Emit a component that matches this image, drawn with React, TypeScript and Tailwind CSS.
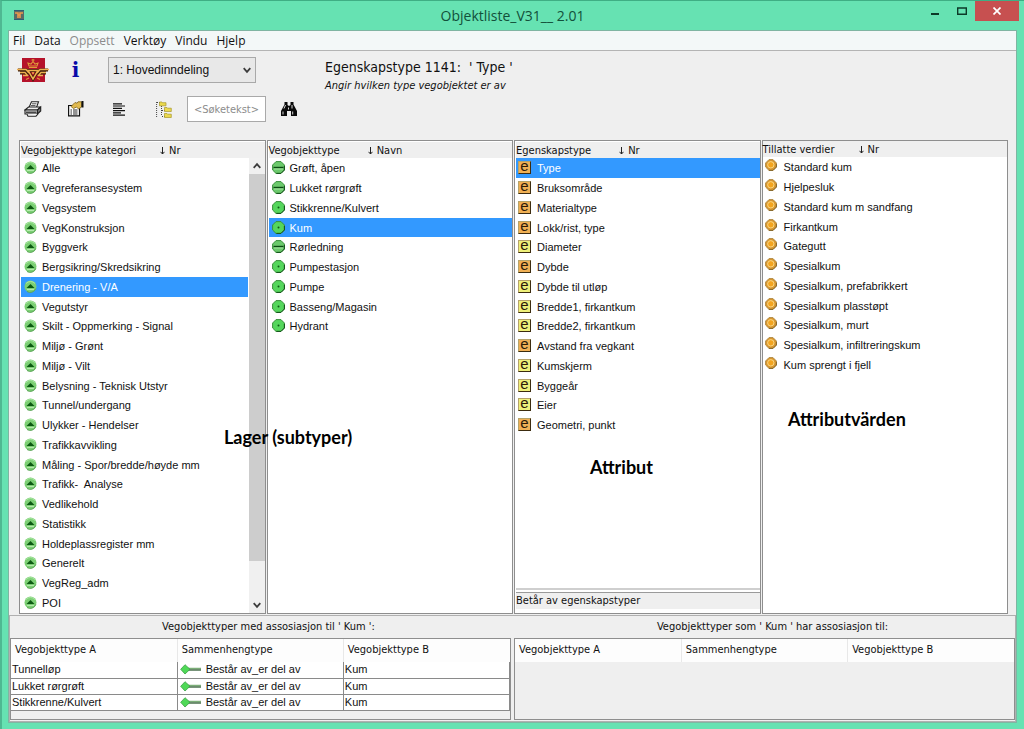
import { useState } from 'react';
import type { ReactNode } from 'react';

const tahoma = "font-['DejaVu_Sans_Condensed','DejaVu_Sans',sans-serif]";

const categories = [
  'Alle', 'Vegreferansesystem', 'Vegsystem', 'VegKonstruksjon', 'Byggverk', 'Bergsikring/Skredsikring',
  'Drenering - V/A', 'Vegutstyr', 'Skilt - Oppmerking - Signal', 'Miljø - Grønt', 'Miljø - Vilt',
  'Belysning - Teknisk Utstyr', 'Tunnel/undergang', 'Ulykker - Hendelser', 'Trafikkavvikling',
  'Måling - Spor/bredde/høyde mm', 'Trafikk-  Analyse', 'Vedlikehold', 'Statistikk',
  'Holdeplassregister mm', 'Generelt', 'VegReg_adm', 'POI',
];

const objectTypes = [
  { name: 'Grøft, åpen', line: true },
  { name: 'Lukket rørgrøft', line: true },
  { name: 'Stikkrenne/Kulvert', line: false },
  { name: 'Kum', line: false },
  { name: 'Rørledning', line: true },
  { name: 'Pumpestasjon', line: false },
  { name: 'Pumpe', line: false },
  { name: 'Basseng/Magasin', line: false },
  { name: 'Hydrant', line: false },
];

const properties = [
  { name: 'Type', orange: true },
  { name: 'Bruksområde', orange: true },
  { name: 'Materialtype', orange: true },
  { name: 'Lokk/rist, type', orange: true },
  { name: 'Diameter', orange: false },
  { name: 'Dybde', orange: true },
  { name: 'Dybde til utløp', orange: false },
  { name: 'Bredde1, firkantkum', orange: false },
  { name: 'Bredde2, firkantkum', orange: false },
  { name: 'Avstand fra vegkant', orange: true },
  { name: 'Kumskjerm', orange: false },
  { name: 'Byggeår', orange: false },
  { name: 'Eier', orange: false },
  { name: 'Geometri, punkt', orange: true },
];

const allowedValues = [
  'Standard kum', 'Hjelpesluk', 'Standard kum m sandfang', 'Firkantkum', 'Gategutt', 'Spesialkum',
  'Spesialkum, prefabrikkert', 'Spesialkum plasstøpt', 'Spesialkum, murt',
  'Spesialkum, infiltreringskum', 'Kum sprengt i fjell',
];

const associations = ['Tunnelløp', 'Lukket rørgrøft', 'Stikkrenne/Kulvert'];

const CategoryIcon = () => (
  <svg className="h-[13px] w-[13px]" viewBox="0 0 13 13">
    <circle cx="6.5" cy="6.5" r="6" fill="#7ccf74" />
    <path d="M2 3.5A6 6 0 0 1 11 3.5" stroke="#a9e6a2" fill="none" />
    <path d="M11.8 8.5A6 6 0 0 1 3 11.5" stroke="#5aa456" fill="none" />
    <path d="M2.5 8L6.5 4L10.5 8Z" fill="#0c5a12" />
    <path d="M3 9.5H10" stroke="#b4e8ac" />
  </svg>
);

const ObjectIcon = ({ line }: { line: boolean }) => (
  <svg className="h-[13px] w-[13px]" viewBox="0 0 13 13">
    <path d="M4 .6H9L12.4 4V9L9 12.4H4L.6 9V4Z" fill={line ? '#6cc96c' : '#55d65c'} stroke="#3a8f3c" strokeWidth="1" />
    <path d="M12.4 5V9L9 12.4H4.5" stroke="#14501a" fill="none" />
    {line ? (
      <>
        <path d="M1.5 6.5H11.5" stroke="#0b4a12" strokeWidth="1.4" />
        <path d="M2 8H11" stroke="#b4ecb0" strokeWidth=".8" />
      </>
    ) : (
      <circle cx="6.5" cy="6.5" r="1" fill="#0c5a12" />
    )}
  </svg>
);

const PropertyIcon = ({ orange }: { orange: boolean }) => (
  <span
    className={`flex h-[13px] w-[13px] items-center justify-center border border-t-[#b5a36a] border-l-[#b5a36a] border-r-[#3c2c10] border-b-[#3c2c10] text-[15px] leading-3 text-[#2c1a08] ${
      orange ? 'bg-[#f0b055]' : 'bg-[#eef07a]'
    }`}
  >
    <span className="-mt-1">e</span>
  </span>
);

const ValueIcon = () => (
  <svg className="h-3 w-3" viewBox="0 0 12 12">
    <path d="M4 .6H8L11.4 4V8L8 11.4H4L.6 8V4Z" fill="#d9962e" stroke="#b08d4a" />
    <path d="M11.4 5V8L8 11.4H4" stroke="#86662a" fill="none" />
    <circle cx="5.8" cy="5.8" r="3.2" fill="#f3a41f" stroke="#f9dc90" strokeWidth=".9" />
  </svg>
);

const LinkIcon = () => (
  <svg className="h-[11px] w-[22px] shrink-0" viewBox="0 0 22 11">
    <path d="M8 4.5H21" stroke="#7cae78" strokeWidth="1.5" />
    <path d="M8 6H21" stroke="#1f4d22" strokeWidth="1.2" />
    <path d="M5 .7L10 5.3L5 10L.7 5.3Z" fill="#4fd957" stroke="#3aa044" strokeWidth=".8" />
  </svg>
);

const Logo = () => (
  <svg className="h-6 w-8" viewBox="0 0 32 24">
    <rect x="5" y="0" width="23" height="24" fill="#b5122a" />
    <g fill="none" stroke="#3a1a08" strokeWidth="3">
      <path d="M1 12H9L12 15M31 12H23L20 15M3 15H8L11 17M29 15H24L21 17" />
      <path d="M11 12.5H21L16 21Z" />
    </g>
    <g fill="none" stroke="#eeb050" strokeWidth="1.5">
      <path d="M0 11.5H9L12 15M32 11.5H23L20 15M3 14.5H8L11 18M29 14.5H24L21 18M6 17.5H11M26 17.5H21" />
      <path d="M11 12.5H21L16 21Z" />
    </g>
    <g fill="none" stroke="#e09a3a" strokeWidth="1.1">
      <path d="M12 9.5H20M12 8L11 5L14 6L16 3.5L18 6L21 5L20 8ZM16 1V4M14.5 2H17.5" />
      <path d="M9 21.5L12 20M23 21.5L20 20" />
    </g>
    <circle cx="16" cy="15" r="1" fill="#eeb050" />
  </svg>
);

const PrinterIcon = () => (
  <svg className="h-4 w-[18px]" viewBox="0 0 18 16" fill="#fff" stroke="#222" strokeWidth="1.1">
    <path d="M5 6.5L7.5 .8H14.5L12.5 6.5Z" />
    <path d="M8 2.8H12.5M7 4.6H11.5" strokeWidth=".8" />
    <path d="M1 9L4.5 6H16L13.5 9Z" fill="#eee" />
    <path d="M1 9H13.5V13H1Z" fill="#ddd" />
    <path d="M13.5 9L16.7 6V10L13.5 13Z" fill="#777" />
    <path d="M2 11.2H12.5" strokeWidth="1.2" />
    <path d="M3 13.2L4 15.2H12L14 13" />
  </svg>
);

const PropertiesIcon = () => (
  <svg className="h-4 w-4" viewBox="0 0 16 16" fill="none" stroke="#111">
    <path d="M.6 4.5H11.5V14.8H.6Z" fill="#fff" strokeWidth="1.2" />
    <path d="M2.5 9H4M5 9H9.5M2.5 11H4M5 11H9.5M2.5 13H4M5 13H9.5" strokeWidth=".9" />
    <path d="M3 5.5L7 1.5L9 2.2L10 .8H13.5V6L10.5 8L8.5 6L5.5 7.5Z" fill="#e0b94e" stroke="#7b611c" strokeWidth=".8" />
    <path d="M14.5 0V6.5" strokeWidth="2" />
  </svg>
);

const ListIcon = () => (
  <svg className="h-[13px] w-3" viewBox="0 0 12 13" stroke="#111" strokeWidth="1.2">
    <path d="M0 .8H9M0 3H12M0 5.3H9M0 7.6H12M0 9.9H8M0 12.2H12" />
  </svg>
);

const TreeIcon = () => (
  <svg className="h-[17px] w-4" viewBox="0 0 16 17">
    <path d="M.6 1V17M1 1.5H4M5.5 5V15M6 9.5H9M6 15.5H9" stroke="#444" strokeDasharray="1 1" fill="none" />
    <g fill="#ead94c" stroke="#a8962c" strokeWidth=".7">
      <path d="M3.5 1H6L6.5 1.7H10V4.8H3.5Z" />
      <path d="M8.5 6.5H11L11.5 7.2H15.3V10.5H8.5Z" />
      <path d="M8.5 12.5H11L11.5 13.2H15.3V16.5H8.5Z" />
    </g>
  </svg>
);

const BinocularsIcon = () => (
  <svg className="h-[14px] w-4" viewBox="0 0 16 14" fill="#0a0a0a">
    <path d="M3.5 0H6.5V3L8 4L9.5 3V0H12.5V2.5L16 9V14H10V9H6V14H0V9L3.5 2.5Z" />
    <path d="M2 9.5V12.5M11.7 9.5V12.5M4.5 3L3 6.5M11 3V6.5M7.5 5.5V7.5" stroke="#eee" strokeWidth=".9" />
  </svg>
);

const Chevron = ({ up = false }: { up?: boolean }) => (
  <svg className="h-2 w-2" viewBox="0 0 8 8" fill="none" stroke="#3c3c3c" strokeWidth="1.8">
    <path d={up ? 'M.7 5.8L4 2.2L7.3 5.8' : 'M.7 2.2L4 5.8L7.3 2.2'} />
  </svg>
);

interface ListPanelProps {
  title: string;
  sort: string;
  gap: string;
  items: { name: string; icon: ReactNode }[];
  initial?: string;
  rowClass: string;
  flat?: boolean;
  scroll?: boolean;
  footer?: ReactNode;
}

const ListPanel = ({ title, sort, gap, items, initial, rowClass, flat, scroll, footer }: ListPanelProps) => {
  const [selected, setSelected] = useState(initial);

  return (
    <section className={`flex min-w-0 flex-col border border-[#8e8e8e] bg-white ${flat ? '' : 'pt-px pl-px'}`}>
      <div className={`flex h-4 items-center bg-[#efefef] text-[11px] leading-[18px] ${gap} ${tahoma}`}>
        <h2 className="pt-px">{title}</h2>
        <button className="flex items-center gap-1 pt-px">
          <svg className="h-2 w-[5px]" viewBox="0 0 5 8" fill="none" stroke="#222">
            <path d="M2.5 0V7M.5 4.8L2.5 7L4.5 4.8" />
          </svg>
          {sort}
        </button>
      </div>
      <div className="flex flex-1">
        <ul className="min-w-0 flex-1">
          {items.map((item) => (
            <li key={item.name} className="h-5 nth-[4n]:h-[19px]">
              <button
                className={`flex h-full w-full whitespace-pre text-left text-[11px] leading-5 ${rowClass} ${
                  selected === item.name ? 'bg-[#3399ff] text-white' : ''
                }`}
                onClick={() => setSelected(item.name)}
              >
                {item.icon}
                <span>{item.name}</span>
              </button>
            </li>
          ))}
        </ul>
        {scroll && (
          <div className="ml-px flex w-4 flex-col bg-[#f0f0f0]">
            <button className="flex h-4 items-center justify-center" aria-label="Rull opp">
              <Chevron up />
            </button>
            <div className="grow-[386] bg-[#cdcdcd]" />
            <div className="grow-[36]" />
            <button className="flex h-4 items-center justify-center" aria-label="Rull ned">
              <Chevron />
            </button>
          </div>
        )}
      </div>
      {footer}
    </section>
  );
};

const AssociationTable = ({ caption, rows }: { caption: string; rows: string[] }) => (
  <div className="flex flex-1 flex-col">
    <h2 className={`h-[22px] pl-4 text-center text-[11px] leading-[22px] ${tahoma}`}>{caption}</h2>
    <div className="flex-1 border border-[#8e8e8e] bg-[#efefef]">
      <table className="w-full table-fixed border-collapse text-[11px]">
        <thead>
          <tr className={`h-[23px] bg-[#fdfdfd] text-left ${tahoma}`}>
            <th className="border-r border-[#e8e8e8] pl-1 font-normal">Vegobjekttype A</th>
            <th className="border-r border-[#e8e8e8] pl-1 font-normal">Sammenhengtype</th>
            <th className="pl-1 font-normal">Vegobjekttype B</th>
          </tr>
        </thead>
        <tbody>
          {rows.map((row) => (
            <tr key={row} className="h-4 border-b border-[#8a8a8a] bg-white leading-[15px]">
              <td className="border-r border-[#8a8a8a] p-0 pl-px">{row}</td>
              <td className="border-r border-[#8a8a8a] p-0 pl-0.5">
                <span className="flex items-center gap-1">
                  <LinkIcon />
                  Består av_er del av
                </span>
              </td>
              <td className="border-r border-[#8a8a8a] p-0 pl-px">Kum</td>
            </tr>
          ))}
        </tbody>
      </table>
    </div>
  </div>
);

const Note = ({ className, children }: { className: string; children: ReactNode }) => (
  <p className={`pointer-events-none absolute font-['Lato',sans-serif] text-[18px] leading-5 font-bold whitespace-nowrap text-black ${className}`}>
    {children}
  </p>
);

const App = () => {
  const [search, setSearch] = useState('');

  return (
    <div className="flex min-h-screen flex-col border-t border-l-2 border-t-[#3fae84] border-l-[#4fb892] bg-[#66e2b2] pr-[7px] pb-[7px] pl-[6px] font-['Liberation_Sans',Arial,sans-serif] text-[#111]">
      <header className="-mr-0.5 flex h-[29px] items-start">
        <svg className="mt-[9px] ml-[6px] h-[10px] w-[10px]" viewBox="0 0 10 10">
          <rect width="10" height="10" fill="#5b6b66" />
          <path d="M1 3H4V8M9 3H6V8M4 5H6" stroke="#ee9a4c" strokeWidth="1.6" fill="none" />
          <path d="M0 9.5H10M0 .5H10" stroke="#2e5c74" />
        </svg>
        <h1 className="flex-1 pl-20 text-center font-['Open_Sans',sans-serif] text-[14px] leading-[29px] text-[#12503a]">
          Objektliste_V31__ 2.01
        </h1>
        <button className="flex h-5 w-[27px] items-center justify-center" aria-label="Minimer">
          <svg className="h-3 w-2" viewBox="0 0 8 12"><path d="M0 9H8" stroke="#0d3a28" strokeWidth="2" /></svg>
        </button>
        <button className="flex h-5 w-[27px] items-center justify-center" aria-label="Maksimer">
          <svg className="h-2 w-[10px]" viewBox="0 0 10 8"><path d="M.7 1H9.3V7.3H.7Z" fill="none" stroke="#0d3a28" strokeWidth="1.4" /></svg>
        </button>
        <button className="flex h-5 w-11 items-center justify-center bg-[#c75050]" aria-label="Lukk">
          <svg className="h-2 w-2" viewBox="0 0 8 8"><path d="M.5 .5L7.5 7.5M7.5 .5L.5 7.5" stroke="#fff" strokeWidth="1.7" /></svg>
        </button>
      </header>

      <div className="flex flex-1 flex-col border border-[#7fb5a2] bg-[#efefef]">
        <nav className="flex h-5 items-center gap-[9px] border-b border-[#b4b4b4] bg-[#f3f8f8] pl-1 font-['Open_Sans',sans-serif] text-[12px] leading-[18px]">
          <button>Fil</button>
          <button>Data</button>
          <button className="text-[#8c8c8c]" disabled>Oppsett</button>
          <button>Verktøy</button>
          <button>Vindu</button>
          <button>Hjelp</button>
        </nav>

        {/* Toolbar */}
        <div className="flex pt-[6px] pb-[18px] pl-0.5">
          <div className="flex flex-col gap-[13px]">
            <div className="flex h-[26px] items-center">
              <button className="flex w-[43px] justify-center" aria-label="Statens vegvesen"><Logo /></button>
              <button className="w-[43px] font-['DejaVu_Serif',serif] text-[20px] leading-6 font-bold text-[#0a0aa8]">i</button>
              <div className="relative ml-[11px]">
                <select
                  aria-label="Inndeling"
                  className="h-[26px] w-[148px] appearance-none border border-[#a9a9a9] bg-[#e8e8e8] pl-1 text-[12px]"
                >
                  <option>1: Hovedinndeling</option>
                </select>
                <span className="pointer-events-none absolute top-[9px] right-[5px]"><Chevron /></span>
              </div>
            </div>
            <div className="flex h-[26px] items-center">
              <button className="flex w-[43px] justify-center" aria-label="Skriv ut"><PrinterIcon /></button>
              <button className="flex w-[43px] justify-center" aria-label="Egenskaper"><PropertiesIcon /></button>
              <button className="flex w-[43px] justify-center" aria-label="Liste"><ListIcon /></button>
              <button className="flex w-[47px] justify-center" aria-label="Tre"><TreeIcon /></button>
              <input
                aria-label="Søketekst"
                className={`h-[26px] w-[79px] border border-[#a9a9a9] bg-white text-center text-[11px] placeholder:text-[#8c8c8c] ${tahoma}`}
                placeholder="<Søketekst>"
                value={search}
                onChange={(e) => setSearch(e.target.value)}
              />
              <button className="flex w-[46px] justify-center" aria-label="Søk"><BinocularsIcon /></button>
            </div>
          </div>
          <div className={`ml-[13px] ${tahoma}`}>
            <h2 className="text-[14px] leading-5 whitespace-pre">Egenskapstype 1141:  ' Type '</h2>
            <p className="text-[11px] leading-[18px] italic">Angir hvilken type vegobjektet er av</p>
          </div>
        </div>

        {/* Lists */}
        <div className="relative mr-2 ml-[10px] grid flex-1 grid-cols-4 gap-px">
          <ListPanel
            title="Vegobjekttype kategori"
            sort="Nr"
            gap="gap-6"
            initial="Drenering - V/A"
            rowClass="gap-[5px] pl-[3px] *:first:mt-[3px]"
            items={categories.map((name) => ({ name, icon: <CategoryIcon /> }))}
            scroll
          />
          <ListPanel
            title="Vegobjekttype"
            sort="Navn"
            gap="gap-7"
            initial="Kum"
            rowClass="gap-[5px] pl-[3px] *:first:mt-[3px]"
            items={objectTypes.map((o) => ({ name: o.name, icon: <ObjectIcon line={o.line} /> }))}
          />
          <ListPanel
            title="Egenskapstype"
            sort="Nr"
            gap="gap-7"
            initial="Type"
            rowClass="gap-[6px] pl-0.5 *:first:mt-[3px]"
            items={properties.map((p) => ({ name: p.name, icon: <PropertyIcon orange={p.orange} /> }))}
            footer={
              <div className={`border-t-2 border-[#cfcfcf] pb-1 text-[11px] leading-4 ${tahoma}`}>
                <p className="mt-0.5 border-t border-[#9a9a9a] bg-[#efefef]">Betår av egenskapstyper</p>
              </div>
            }
          />
          <ListPanel
            title="Tillatte verdier"
            sort="Nr"
            gap="gap-6"
            rowClass="gap-[7px] pl-0.5 *:first:mt-0.5"
            items={allowedValues.map((name) => ({ name, icon: <ValueIcon /> }))}
            flat
          />
          <Note className="top-[287px] left-[205px]">Lager (subtyper)</Note>
          <Note className="top-[317px] left-[571px]">Attribut</Note>
          <Note className="top-[269px] left-[769px]">Attributvärden</Note>
        </div>

        {/* Associations */}
        <div className="mt-px flex h-[107px] gap-[3px] border border-[#b0b0b0] pb-px">
          <AssociationTable caption="Vegobjekttyper med assosiasjon til ' Kum ':" rows={associations} />
          <AssociationTable caption="Vegobjekttyper som ' Kum ' har assosiasjon til:" rows={[]} />
        </div>
      </div>
    </div>
  );
};

export default App;
